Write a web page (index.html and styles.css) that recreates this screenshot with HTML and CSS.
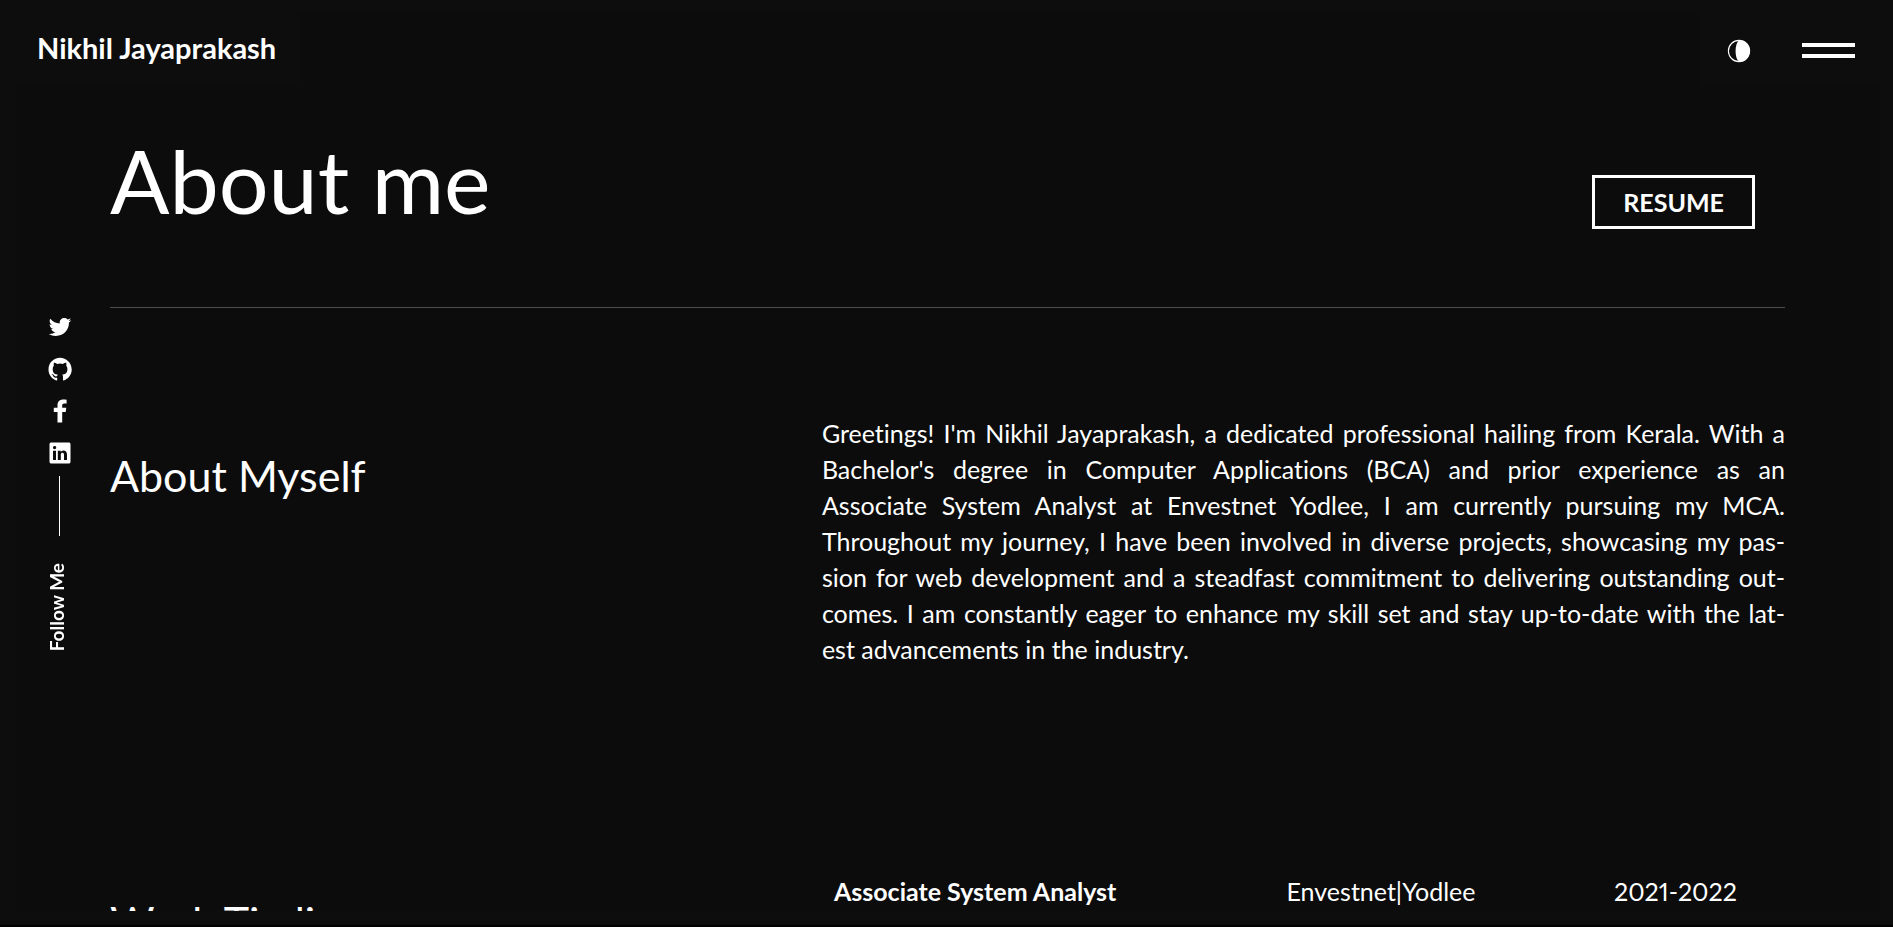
FILE: index.html
```html
<!DOCTYPE html>
<html lang="en">
<head>
<meta charset="utf-8">
<meta name="viewport" content="width=device-width, initial-scale=1">
<title>About | Nikhil Jayaprakash</title>
<link rel="stylesheet" href="styles.css">
</head>
<body>
<header class="site-header">
  <a class="brand" href="#">Nikhil Jayaprakash</a>
  <div class="header-actions">
    <button class="theme-toggle" type="button" aria-label="Toggle theme">
      <svg viewBox="0 0 24 24" width="24" height="24"><circle cx="12" cy="12" r="10.6" fill="none" stroke="#fff" stroke-width="1.1"/><path d="M12 1.2a10.8 10.8 0 0 1 0 21.6C7.400 19 7.400 5 12 1.200z" fill="#fff"/></svg>
    </button>
    <button class="menu-toggle" type="button" aria-label="Open menu"><span class="menu-bar"></span><span class="menu-bar"></span></button>
  </div>
</header>

<aside class="follow">
  <ul class="follow-list">
    <li><a href="#" aria-label="Twitter"><svg viewBox="0 0 512 512" width="24" height="24"><path fill="#fff" d="M496 109.500a201.800 201.800 0 0 1-56.550 15.300 97.510 97.510 0 0 0 43.330-53.600 197.740 197.740 0 0 1-62.560 23.500A99.140 99.140 0 0 0 348.310 64c-54.420 0-98.460 43.400-98.460 96.900a93.210 93.210 0 0 0 2.540 22.100 280.700 280.700 0 0 1-203-101.300A95.690 95.690 0 0 0 36 130.400c0 33.600 17.530 63.300 44 80.700A97.500 97.500 0 0 1 35.220 199v1.200c0 47 34 86.100 79 95a100.760 100.760 0 0 1-25.940 3.400 94.380 94.380 0 0 1-18.510-1.800c12.510 38.500 48.920 66.500 92.050 67.300A199.590 199.590 0 0 1 39.500 405.600a203 203 0 0 1-23.500-1.400A278.680 278.680 0 0 0 166.740 448c181.360 0 280.440-147.700 280.440-275.800 0-4.200-.11-8.400-.31-12.500A198.480 198.480 0 0 0 496 109.500z"/></svg></a></li>
    <li><a href="#" aria-label="GitHub"><svg viewBox="0 0 24 24" width="24" height="24"><path fill="#fff" d="M12 .8C5.600.8.500 6 .500 12.400c0 5.100 3.300 9.500 7.900 11 .6.1.8-.2.8-.6v-2.100c-3.200.7-3.900-1.400-3.900-1.400-.5-1.300-1.300-1.700-1.300-1.700-1-.7.1-.7.1-.7 1.200.1 1.800 1.200 1.800 1.200 1 1.800 2.700 1.300 3.300 1 .1-.7.4-1.300.7-1.500-2.600-.3-5.200-1.300-5.200-5.700 0-1.300.4-2.300 1.200-3.100-.1-.3-.5-1.500.1-3.100 0 0 1-.3 3.200 1.200a11 11 0 0 1 5.700 0c2.200-1.500 3.200-1.200 3.200-1.200.6 1.600.2 2.800.1 3.100.7.800 1.200 1.800 1.200 3.100 0 4.400-2.700 5.400-5.200 5.700.4.400.8 1.100.8 2.100v3.100c0 .3.200.7.800.6 4.600-1.500 7.900-5.900 7.900-11C23.500 6 18.400.8 12 .8z"/></svg></a></li>
    <li><a href="#" aria-label="Facebook"><svg viewBox="0 0 24 24" width="24" height="24"><path fill="#fff" d="M14.200 23.500V12.900h3.500l.6-4.200h-4.100V6.600c0-1.300.6-2.200 2.400-2.200h2V.8C17.900.7 16.700.5 15.300.5c-3.500 0-5.800 2.100-5.800 5.500v2.700H5.800v4.200h3.700v10.600z"/></svg></a></li>
    <li><a href="#" aria-label="LinkedIn"><svg viewBox="0 0 512 512" width="24" height="24"><path fill="#fff" d="M444.170 32H70.280C49.850 32 32 46.700 32 66.890v374.720C32 461.910 49.850 480 70.280 480h373.780c20.540 0 35.940-18.210 35.940-38.390V66.890C480.120 46.700 464.600 32 444.170 32zm-273.300 373.430h-64.180V205.880h64.180zM141 175.540h-.46c-20.540 0-33.840-15.290-33.840-34.430 0-19.490 13.650-34.420 34.650-34.420s33.850 14.820 34.310 34.420c-.01 19.140-13.310 34.430-34.660 34.430zm264.430 229.890h-64.180V296.320c0-26.140-9.340-44-32.560-44-17.740 0-28.240 12-32.910 23.690-1.750 4.200-2.220 9.920-2.220 15.760v113.660h-64.180V205.880h64.180v27.770c9.340-13.300 23.930-32.440 57.880-32.440 42.130 0 74 27.770 74 87.640z"/></svg></a></li>
  </ul>
  <p class="follow-label">Follow Me</p>
</aside>

<main class="page">
  <div class="page-head">
    <h1 class="page-title">About me</h1>
    <a class="resume" href="#">RESUME</a>
  </div>
  <section class="row">
    <h2 class="section-title about-title">About Myself</h2>
    <p class="bio">
      <span>Greetings! I'm Nikhil Jayaprakash, a dedicated professional hailing from Kerala. With a</span>
      <span>Bachelor's degree in Computer Applications (BCA) and prior experience as an</span>
      <span>Associate System Analyst at Envestnet Yodlee, I am currently pursuing my MCA.</span>
      <span>Throughout my journey, I have been involved in diverse projects, showcasing my pas-</span>
      <span>sion for web development and a steadfast commitment to delivering outstanding out-</span>
      <span>comes. I am constantly eager to enhance my skill set and stay up-to-date with the lat-</span>
      <span>est advancements in the industry.</span>
    </p>
  </section>
  <section class="row work">
    <h2 class="section-title work-title">Work Timline</h2>
    <table class="jobs">
      <tbody><tr><th scope="row">Associate System Analyst</th><td>Envestnet|Yodlee</td><td>2021-2022</td></tr></tbody>
    </table>
  </section>
</main>
<div class="frame frame-top"></div>
<div class="frame frame-left"></div>
<div class="frame frame-right"></div>
<div class="frame frame-bottom"></div>
</body>
</html>
```
FILE: styles.css
```css
:root {
  --bg: #0c0c0c;
  --edge: #0d0d0d;
  --text: #fff;
  --display: Lato, "Liberation Sans", sans-serif;
  --sans: Lato, "Liberation Sans", sans-serif;
}

* { box-sizing: border-box; }

body {
  margin: 0;
  height: 100vh;
  overflow: hidden;
  background: var(--bg);
  color: var(--text);
  font-family: var(--sans);
  font-size: 25px;
  line-height: 36px;
  font-variant-ligatures: none;
  font-variant-numeric: proportional-nums;
}

h1, h2, p, ul { margin: 0; padding: 0; font-weight: 400; }
a { color: inherit; text-decoration: none; }
button { padding: 0; border: 0; background: none; cursor: pointer; }
svg { display: block; }

.frame { position: fixed; z-index: 3; background: var(--edge); }
.frame-top { top: 0; left: 0; right: 0; height: 12px; }
.frame-left { top: 0; bottom: 0; left: 0; width: 15px; }
.frame-right { top: 0; bottom: 0; right: 0; width: 13px; }
.frame-bottom { left: 0; right: 0; bottom: 0; height: 16px; border-bottom: 2px solid #000; }

.site-header {
  position: fixed;
  z-index: 4;
  top: 0;
  left: 0;
  right: 0;
  display: flex;
  justify-content: space-between;
}
.brand {
  padding: 30px 22px 20px 37px;
  background: var(--edge);
  font-family: var(--display);
  font-size: 29px;
  font-weight: 700;
}
.header-actions {
  display: flex;
  align-items: center;
  gap: 51px;
  padding: 15px 38px 0 26px;
  background: var(--edge);
}
.menu-toggle { display: flex; flex-direction: column; gap: 7px; width: 53px; }
.menu-bar { height: 4px; background: var(--text); }

.follow {
  position: fixed;
  z-index: 4;
  left: 48px;
  top: 315px;
  display: flex;
  flex-direction: column;
  align-items: center;
}
.follow-list { display: flex; flex-direction: column; gap: 18px; list-style: none; }
.follow-list::after { content: ""; width: 1px; height: 60px; margin-left: 11px; margin-top: -7px; background: var(--text); }
.follow-label {
  margin-top: 27px;
  padding-left: 6px;
  writing-mode: vertical-rl;
  transform: rotate(180deg);
  font-size: 19px;
  font-weight: 700;
  line-height: 18px;
}

.page { padding: 128px 108px 0 110px; }
.page-head {
  display: flex;
  justify-content: space-between;
  align-items: flex-start;
  padding: 0 30px 74px 0;
  border-bottom: 1px solid #4d4d4d;
}
.page-title { font-family: var(--display); font-size: 88px; line-height: 105px; }
.resume {
  margin-top: 47px;
  padding: 6px 28px;
  border: 3px solid var(--text);
  font-weight: 700;
}
.row { display: grid; grid-template-columns: 17fr 23fr; align-items: start; padding-top: 107px; }
.section-title { font-family: var(--display); font-size: 43px; line-height: 50px; }
.about-title { padding-top: 36px; }
.bio span { display: block; text-align: justify; text-align-last: justify; }
.bio span:last-child { text-align-last: left; }
.work { padding-top: 206px; }
.work-title { padding-top: 24px; }
.jobs { width: 100%; border-collapse: collapse; table-layout: fixed; }
.jobs th, .jobs td { padding: 0 12px; font-weight: 400; text-align: left; white-space: nowrap; }
.jobs th { width: 47%; font-weight: 700; }
.jobs td:nth-child(2) { width: 34%; }
```
